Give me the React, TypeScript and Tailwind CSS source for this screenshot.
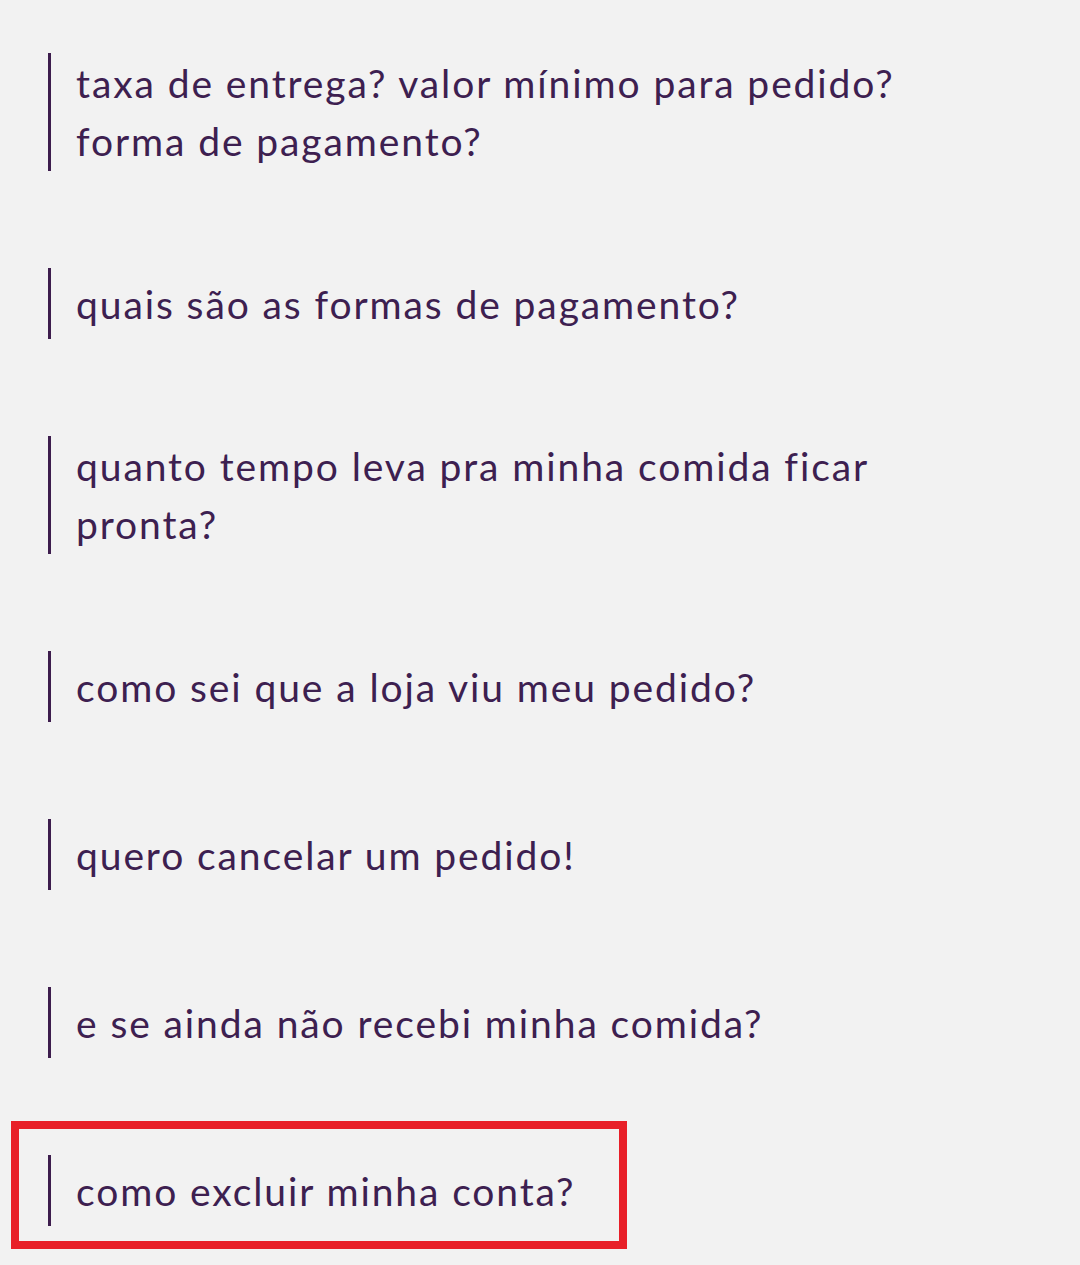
import React from 'react'

const perguntas = [
  'taxa de entrega? valor mínimo para pedido? forma de pagamento?',
  'quais são as formas de pagamento?',
  'quanto tempo leva pra minha comida ficar pronta?',
  'como sei que a loja viu meu pedido?',
  'quero cancelar um pedido!',
  'e se ainda não recebi minha comida?',
]

function Pergunta({ texto }: { texto: string }) {
  return (
    <div className="flex min-h-[71px] items-center border-l-[3px] border-[#3d1d4d] py-[1px] pl-[25px]">
      <p className="max-w-[860px] text-[39px] leading-[58px] tracking-[1.9px] text-[#3d2050]">{texto}</p>
    </div>
  )
}

export default function App() {
  return (
    <main
      className="min-h-[1265px] bg-[#f2f2f2] pl-[48px] pt-[53px]"
      style={{ fontFamily: 'Lato, "Noto Sans", sans-serif' }}
    >
      <div className="flex flex-col gap-[97px]">
        {perguntas.map((p) => (
          <Pergunta key={p} texto={p} />
        ))}

        {/* item destacado */}
        <div className="relative">
          <span className="pointer-events-none absolute left-[-37px] top-[-34px] h-[128px] w-[616px] border-[8px] border-[#e81f28]" />
          <Pergunta texto="como excluir minha conta?" />
        </div>
      </div>
    </main>
  )
}
